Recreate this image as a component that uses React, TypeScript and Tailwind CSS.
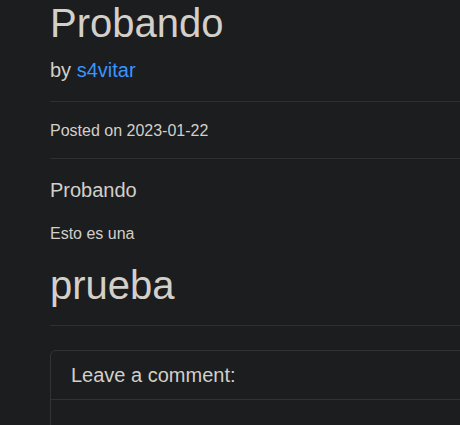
import React from "react";

export default function App() {
  return (
    <div className="w-[460px] h-[425px] overflow-hidden bg-[#1b1d1f] text-[#d3cfc9] font-['Liberation_Sans',Arial,sans-serif]">
      <div className="w-[900px] pl-[50px] -mt-px">
        <h1 className="text-[40px] leading-[48px] mb-2">Probando</h1>
        <p className="text-[20px] leading-[30px] mb-4">
          by <a href="#" className="text-[#3a95ff]">s4vitar</a>
        </p>
        <hr className="my-4 border-t border-[#2d3032]" />
        <p className="text-[16px] leading-[24px] pt-px -mb-px">Posted on 2023-01-22</p>
        <hr className="my-4 border-t border-[#2d3032]" />
        <p className="text-[20px] leading-[30px] mb-4">Probando</p>
        <p className="text-[16px] leading-[24px] pt-px mb-[15px]">Esto es una</p>
        <h1 className="text-[40px] leading-[48px] mb-2">prueba</h1>
        <hr className="my-4 border-t border-[#2d3032]" />
        <div className="mt-6 border border-[#303335] rounded-md">
          <div className="px-5 py-3 border-b border-[#303335] text-[20px] leading-[24px]">
            Leave a comment:
          </div>
          <div className="p-5 h-[120px]"></div>
        </div>
      </div>
    </div>
  );
}
